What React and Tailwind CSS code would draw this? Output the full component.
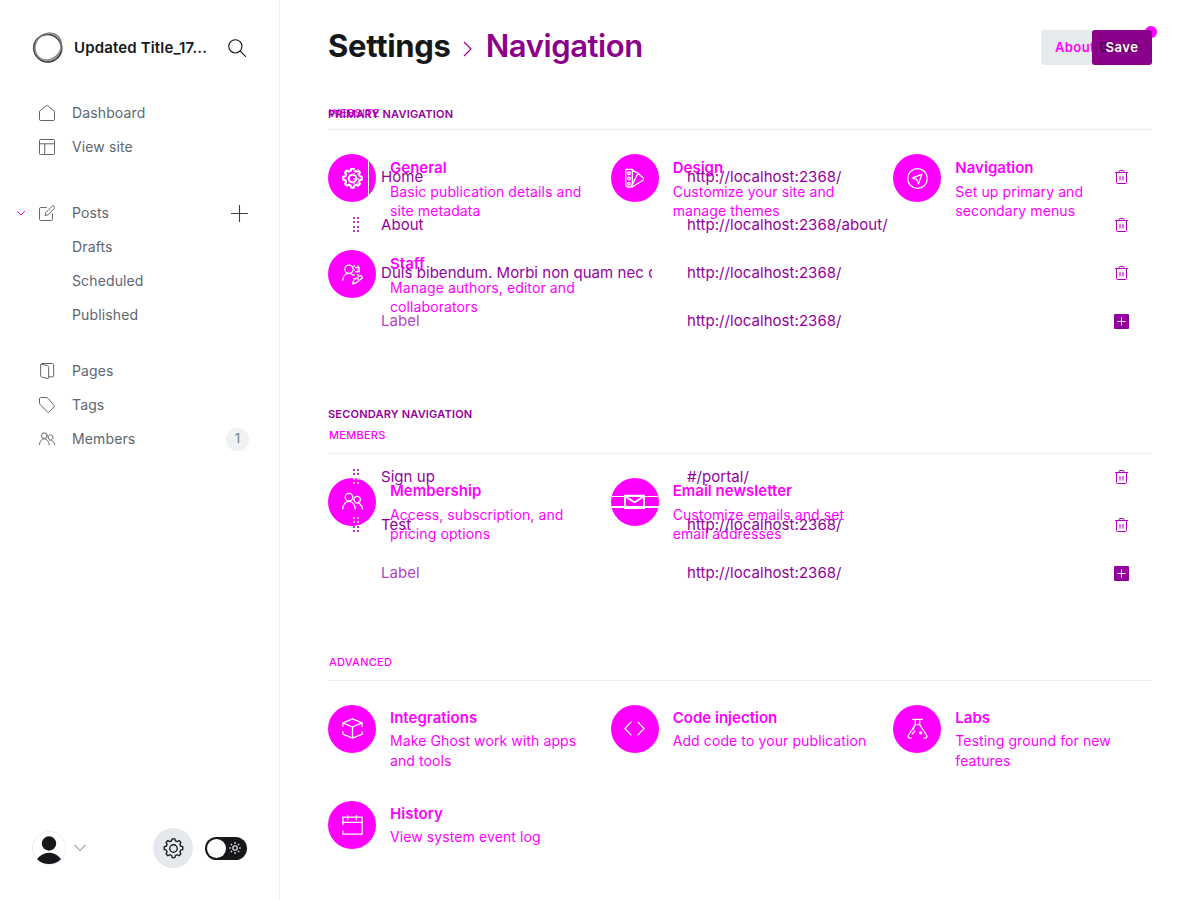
import React from 'react';

function Icon({ size = 16, view = 24, w = 1.5, className = '', children }) {
  return (
    <svg width={size} height={size} viewBox={`0 0 ${view} ${view}`} fill="none" stroke="currentColor" strokeWidth={w} strokeLinecap="round" strokeLinejoin="round" className={`shrink-0 ${className}`}>
      {children}
    </svg>
  );
}

const gearPath = 'M9.8 3.2 10.5.9h3l.7 2.3 2 .9 2.2-1.2 2.1 2.2-1.2 2.2.9 2 2.4.7v3.2l-2.4.7-.9 2 1.2 2.2-2.1 2.2-2.2-1.2-2 .9-.7 2.4h-3l-.7-2.4-2-.9-2.2 1.2-2.1-2.2 1.2-2.2-.9-2-2.4-.7V10l2.4-.7.9-2L3.5 5.1l2.1-2.2 2.2 1.2z';

const icons = {
  home: <path d="M.75 10.5v11.2c0 .9.7 1.55 1.55 1.55h19.4c.85 0 1.55-.65 1.55-1.55V10.5c0-.8-.35-1.5-1-2L13.2 1.2a2 2 0 0 0-2.4 0L1.75 8.5c-.65.5-1 1.2-1 2z" />,
  site: <><rect x=".75" y=".75" width="22.5" height="22.5" rx="1.2" /><path d="M.75 7.2h22.5M8.6 7.2v16" /></>,
  posts: <><path d="M20.2 13v8.7c0 .9-.7 1.5-1.5 1.5H2.3c-.9 0-1.5-.7-1.5-1.5V5.3c0-.9.7-1.5 1.5-1.5H11" /><path d="m13.2 14.800-4.200 1 1-4.200L19.600 1.900a2.200 2.200 0 0 1 3.300 3.300z" /></>,
  pages: <><path d="M2.500 2.500v17c0 .7.4 1.300 1 1.500l9.500 2.300c.8.200 1.500-.4 1.500-1.200V6.300c0-.9-.5-1.700-1.400-2L4 1.500c-.8-.2-1.500.2-1.500 1z" /><path d="M4 .75h16.500c.8 0 1.500.7 1.500 1.500v17c0 .9-.7 1.500-1.500 1.500h-6" /></>,
  tags: <path d="M.75 2.4v6.700c0 .8.300 1.600.9 2.200l11.300 11.200c.6.600 1.600.6 2.200 0l7.400-7.500c.6-.6.6-1.600 0-2.200L14 2.500C13 1.300 11.800.75 10.500.75H2.400c-.9 0-1.650.7-1.650 1.650z" />,
  members: <><circle cx="8" cy="7" r="4.300" /><path d="M.75 20.500c.2-4.800 3-8.700 7.200-8.700 3.800 0 6.700 3.800 7.200 8.700M15.600 13a3.700 3.700 0 1 1 3.300.1M15.700 13.600c4-.8 7.200 2.500 7.600 6.900" /></>,
  gear: <><path d={gearPath} /><circle cx="12" cy="12" r="4.300" /></>,
  design: <><path d="M2 1.500h7.500v17A3.800 3.800 0 0 1 2 19V1.500z M9.500 2.500 16 6l-6.500 13M16 6l6 5.500c.5.500.3 1.500-.3 2.500L9 22" /><circle cx="5.700" cy="6" r="1.500" /><circle cx="5.700" cy="12" r="1.500" /><circle cx="5.700" cy="18" r="1.500" /></>,
  compass: <><circle cx="12" cy="12" r="11.200" /><path d="m6.300 11.300 10.800-4-4 10.800-2-5z" /></>,
  staff: <><circle cx="8" cy="6" r="4.800" /><path d="M.75 18.500c.2-4.300 3-7.700 7.200-7.700 2 0 3.800.9 5 2.400M15.500 4h4v5h-4M12 22.800l1.200-4 7.300-5.300a2 2 0 0 1 2.300 2.800L16 21.600z" /></>,
  mail: <><rect x="1" y="5.500" width="22" height="14" /><path d="m1.500 6 8.800 6c1 .7 2.400.7 3.400 0l8.800-6" /></>,
  box: <path d="M1 9.500V5.500L12 1l11 4.500v4M1 15.500V18.500l11 4.500 11-4.500v-3M1 5.500l11 4.800 11-4.800M12 10.300V23" />,
  code: <path d="M8 4.700 1 12l7 7.300M16 4.700l7 7.300-7 7.300" />,
  labs: <><path d="M6.500 1.500h11M9.500 1.500v6L1.500 20c-.6 1.500 0 3 2 3H5M14.500 1.500v6L22.500 20c.6 1.500 0 3-2 3H19M9.500 7.500 7 13M6 18l3-3M14.500 7.500h-3" /><circle cx="15.500" cy="17" r="1.200" /></>,
  history: <><path d="M1 19.500V23h22V3.500H1V12M1 9.500h22M6.500 1.500v5M16.500 1.500v5" /></>,
};

function NavItem({ icon, label, badge, plus, chevron }) {
  return (
    <div className="flex h-[34px] items-center pl-[15px] pr-[30px]">
      <span className="flex w-6 items-center">
        {chevron && (
          <svg width="12" height="8" viewBox="0 0 12 8" fill="none" stroke="#f0f" strokeWidth="1"><path d="m2 2 4 4 4-4" /></svg>
        )}
      </span>
      <span className="flex w-[33px] items-center">{icon && <Icon size={16} w={1.500}>{icons[icon]}</Icon>}</span>
      <span className="grow pb-[2px]">{label}</span>
      {plus && <svg width="17" height="17" viewBox="0 0 17 17" className="mr-px" stroke="#394047" strokeWidth="1.100" fill="none"><path d="M8.500 0v17M0 8.500h17" /></svg>}
      {badge && <span className="flex h-[23px] w-[23px] items-center justify-center rounded-full bg-[#eff1f3] text-[13px] font-medium tracking-normal text-[#7c8b9a]">{badge}</span>}
    </div>
  );
}

function Sidebar() {
  return (
    <aside className="flex h-[900px] w-[280px] shrink-0 flex-col border-r border-[#ebeef0] bg-white text-[14px] tracking-[0.130px] text-[#5d666f]">
      <div className="mt-8 flex h-8 items-center pl-8 pr-[33px]">
        <svg width="32" height="32" viewBox="0 0 32 32" fill="none" className="shrink-0">
          <circle cx="15.600" cy="16.200" r="13.700" stroke="#333" strokeWidth="1.500" />
          <ellipse cx="17" cy="15" rx="14.300" ry="12.500" transform="rotate(-45 16 16)" stroke="#666" strokeWidth="1.200" />
          <ellipse cx="17" cy="15.600" rx="13.700" ry="12.600" transform="rotate(-65 16 16)" stroke="#999" strokeWidth="1.300" />
          <ellipse cx="15.800" cy="16.200" rx="14.600" ry="13.800" transform="rotate(20 16 16)" stroke="#555" strokeWidth=".8" />
        </svg>
        <span className="ml-[10px] grow whitespace-nowrap text-[15px] font-semibold tracking-[0.150px] text-[#15171a]">Updated Title_17...</span>
        <Icon size={18} w={1.500} className="text-[#15171a]"><circle cx="9.800" cy="9.800" r="8.800" /><path d="m16.300 16.300 7 7" /></Icon>
      </div>
      <nav className="mt-8">
        <NavItem icon="home" label="Dashboard" />
        <NavItem icon="site" label="View site" />
        <div className="mt-8">
          <NavItem icon="posts" label="Posts" plus chevron />
          <NavItem label="Drafts" />
          <NavItem label="Scheduled" />
          <NavItem label="Published" />
        </div>
        <div className="mt-[22px]">
          <NavItem icon="pages" label="Pages" />
          <NavItem icon="tags" label="Tags" />
          <NavItem icon="members" label="Members" badge="1" />
        </div>
      </nav>
      <div className="mb-8 mt-auto flex h-10 items-center pl-8 pr-8">
        <svg width="34" height="34" viewBox="0 0 34 34" className="shrink-0">
          <circle cx="17" cy="17" r="16.500" fill="#fff" stroke="#ebeef0" />
          <circle cx="17" cy="12.500" r="7.200" fill="#15171a" />
          <path d="M5 28c3-4 7.200-6.300 12-6.300S26 24 29 28c-3 3.200-7 5-12 5S8 31.200 5 28z" fill="#15171a" />
        </svg>
        <svg width="12" height="8" viewBox="0 0 12 8" fill="none" stroke="#626d79" className="ml-[8px]"><path d="m.7 1 5.300 5.500L11.300 1" /></svg>
        <span className="ml-auto flex h-10 w-10 items-center justify-center rounded-full bg-[#e5e9ed] text-[#15171a]"><Icon size={21} w={1.500}>{icons.gear}</Icon></span>
        <span className="ml-3 flex h-[23px] w-[42px] items-center justify-between rounded-full bg-[#15171a] pl-[2px] pr-[6px]">
          <span className="h-[19px] w-[19px] rounded-full bg-white" />
          <svg width="12" height="12" viewBox="0 0 12 12" fill="none" stroke="#fff" strokeWidth="1.100"><circle cx="6" cy="6" r="2.200" /><path d="M6 0v2M6 10v2M0 6h2M10 6h2M1.800 1.800l1.300 1.300M8.900 8.900l1.300 1.300M1.800 10.200l1.300-1.300M8.900 3.100l1.300-1.300" /></svg>
        </span>
      </div>
    </aside>
  );
}

function Card({ icon, title, lines, heavy, seam, bands, titleGap = 'mb-[3px]' }) {
  return (
    <div className="flex h-[72px] gap-[14px]">
      <span className="relative flex h-12 w-12 shrink-0 items-center justify-center overflow-hidden rounded-full bg-[#f0f] text-white">
        <Icon size={21} w={heavy ? 2.400 : 1.500}>{icons[icon]}</Icon>
        {seam && <span className="absolute inset-y-0 right-[7px] w-px bg-white" />}
        {bands && <span className="absolute inset-x-0 top-[18px] h-px bg-white" />}
        {bands && <span className="absolute inset-x-0 top-[28px] h-[2px] bg-white" />}
      </span>
      <div className="whitespace-nowrap pt-[3.500px] text-[14px] leading-[19.500px] tracking-[0.100px] text-[#f0f]">
        <h4 className={`${titleGap} text-[15px] font-semibold leading-5 tracking-[0.020px]`}>{title}</h4>
        {lines.map((l) => <p key={l}>{l}</p>)}
      </div>
    </div>
  );
}

function Section({ title, cards, className, heading, titleGap }) {
  return (
    <section className={className}>
      <h3 className={`${heading} border-b border-[#eceeef] pl-px text-[11px] font-medium uppercase leading-[14px] tracking-[0.250px] text-[#f0f]`}>{title}</h3>
      <div className="grid grid-cols-3 gap-6 pt-6">
        {cards.map((c) => <Card key={c.title} titleGap={titleGap} {...c} />)}
      </div>
    </section>
  );
}

// tones holds one colour for each of the four dot rows
function Grip({ tones }) {
  return (
    <svg width="8" height="18" viewBox="0 0 8 18" shapeRendering="crispEdges">
      {[1, 5, 10, 14].map((y, i) => <g key={y} fill={tones[i]}><rect x="1" y={y} width="2" height="2" /><rect x="5" y={y} width="2" height="2" /></g>)}
    </svg>
  );
}

const PURPLE = '#b437bc';
const GREY = '#c8bcc8';
const gripTones = {
  plain: [PURPLE, PURPLE, PURPLE, PURPLE],
  grey: [GREY, GREY, GREY, GREY],
  top: [PURPLE, PURPLE, GREY, GREY],
  bottom: [GREY, GREY, PURPLE, PURPLE],
};

function MenuRow({ label, url, add, grip = 'plain' }) {
  return (
    <div className="flex h-12 items-center text-[15px] tracking-[0.050px] text-[#94009c]">
      <span className="flex w-[53px] pl-6">{!add && <Grip tones={gripTones[grip]} />}</span>
      <span className={add ? 'w-[271px] text-[#b445c2]' : 'w-[271px] overflow-hidden whitespace-nowrap'}>{label}</span>
      <span className="ml-[35px] grow">{url}</span>
      {add ? (
        <span className="mr-[23px] flex h-[15px] w-[15px] items-center justify-center rounded-[1px] bg-[#9400a0]">
          <svg width="9" height="9" viewBox="0 0 9 9" stroke="#fff" fill="none"><path d="M4.500 .5v8M.5 4.500h8" /></svg>
        </span>
      ) : (
        <svg width="13" height="14" viewBox="0 0 13 14" fill="none" stroke="#b000b8" className="mr-6"><path d="M0 2.500h13M4 2.500v-1c0-.6.300-1 1-1h3c.7 0 1 .4 1 1v1M1.500 2.500v10c0 .6.400 1 1 1h8c.6 0 1-.4 1-1v-10M5 6v4.500M8 6v4.500" /></svg>
      )}
    </div>
  );
}

function NavigationForm() {
  const base = 'http://localhost:2368/';
  const heading = 'text-[11px] font-semibold uppercase leading-[14px] tracking-[0.200px] text-[#94009c]';
  return (
    <div className="absolute inset-x-12 top-[107px]">
      <h3 className={heading}>Primary navigation</h3>
      <div className="mt-8">
        <MenuRow label="Home" url={base} grip="grey" />
        <MenuRow label="About" url={base + 'about/'} />
        <MenuRow label="Duis bibendum. Morbi non quam nec dolor" url={base} grip="grey" />
        <MenuRow label="Label" url={base} add />
      </div>
      <h3 className={`mt-[62px] ${heading}`}>Secondary navigation</h3>
      <div className="mt-8">
        <MenuRow label="Sign up" url="#/portal/" grip="top" />
        <MenuRow label="Test" url={base} grip="bottom" />
        <MenuRow label="Label" url={base} add />
      </div>
    </div>
  );
}

const website = [
  { icon: 'gear', title: 'General', lines: ['Basic publication details and', 'site metadata'], heavy: true, seam: true },
  { icon: 'design', title: 'Design', lines: ['Customize your site and', 'manage themes'] },
  { icon: 'compass', title: 'Navigation', lines: ['Set up primary and', 'secondary menus'] },
  { icon: 'staff', title: 'Staff', lines: ['Manage authors, editor and', 'collaborators'] },
];
const members = [
  { icon: 'members', title: 'Membership', lines: ['Access, subscription, and', 'pricing options'] },
  { icon: 'mail', title: 'Email newsletter', lines: ['Customize emails and set', 'email addresses'], heavy: true, bands: true },
];
const advanced = [
  { icon: 'box', title: 'Integrations', lines: ['Make Ghost work with apps', 'and tools'] },
  { icon: 'code', title: 'Code injection', lines: ['Add code to your publication'] },
  { icon: 'labs', title: 'Labs', lines: ['Testing ground for new', 'features'] },
  { icon: 'history', title: 'History', lines: ['View system event log'] },
];

export default function App() {
  return (
    <div className="flex h-[900px] w-[1200px] overflow-hidden bg-white font-['Inter',sans-serif]">
      <Sidebar />
      <main className="relative grow px-12">
        <header className="flex h-[95px] items-center justify-between">
          <h2 className="flex items-center pb-[3px] text-[31px] font-bold leading-10 tracking-[-0.300px] text-[#15171a]">
            <span>Settings</span>
            <svg width="10" height="16" viewBox="0 0 10 16" fill="none" stroke="#a000a0" strokeWidth="1.200" className="mx-[12.500px] mt-[6px]"><path d="m1 1 7 7-7 7" /></svg>
            <span className="font-semibold tracking-[-0.400px] text-[#8b008b]">Navigation</span>
          </h2>
          <div className="relative flex h-[35px] w-[111px] items-center rounded-[3px] bg-[#e6eaed] pl-[14px] text-[13px] font-semibold tracking-[0.400px]">
            <span className="text-[#f0f]">About</span>
            <span className="absolute -right-[5px] -top-1 h-3 w-3 rounded-full bg-[#f0f]" />
            <button className="absolute right-0 top-0 h-[35px] w-[60px] rounded-[3px] bg-[#8b008b] text-white">
              <span className="absolute left-[7px] top-2 text-[#4b004e]">Ghost</span>
              <span className="relative tracking-[0.500px]">Save</span>
            </button>
          </div>
        </header>
        <Section title="Website" cards={website} className="mt-[11px]" heading="h-[24.4px]" titleGap="mb-[3.8px]" />
        <Section title="Members" cards={members} className="mt-[105.6px]" heading="h-[25.8px]" titleGap="mb-[3.4px]" />
        <Section title="Advanced" cards={advanced} className="mt-[105.2px]" heading="h-[25.6px]" />
        <NavigationForm />
      </main>
    </div>
  );
}
